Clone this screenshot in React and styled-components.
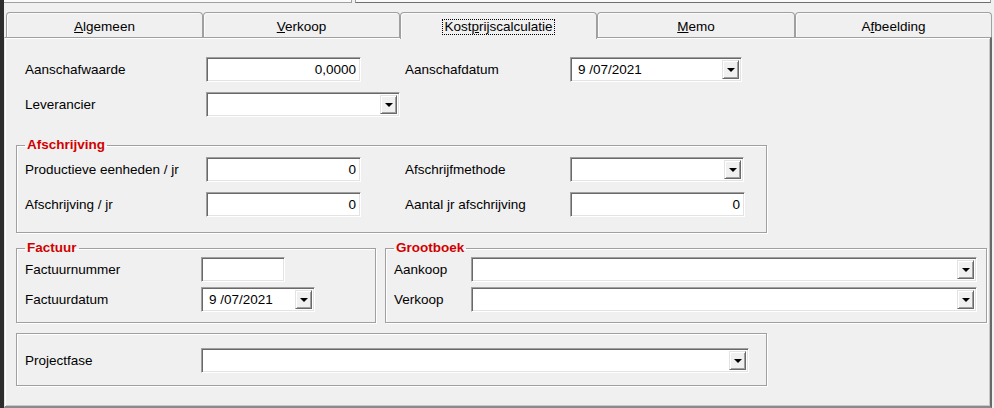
import React from "react";
import styled, { createGlobalStyle, css } from "styled-components";

const GlobalStyle = createGlobalStyle`
  html, body {
    margin: 0;
    padding: 0;
    background: #f0f0f0;
  }
  body {
    font-family: "Liberation Sans", Arial, sans-serif;
    font-size: 13.5px;
    color: #000;
  }
`;

const Shell = styled.div`
  height: 408px;
  display: flex;
  flex-direction: column;
  border-left: 4px solid #2d2d2d;
  box-sizing: border-box;
  overflow: hidden;
`;

const TopStrip = styled.div`
  display: flex;
  gap: 3px;
  height: 3px;
  margin-bottom: 9px;
`;

const StripField = styled.div`
  box-sizing: border-box;
  height: 3px;
  background: #fafafa;
  ${(p) =>
    p.$grow
      ? css`
          flex: 1;
          border-left: 1px solid #a0a0a0;
          border-bottom: 1px solid #6e6e6e;
          border-right: 1px solid #a0a0a0;
          margin-right: 3px;
        `
      : css`
          width: 348px;
          border-right: 1px solid #a0a0a0;
          border-bottom: 1px solid #a0a0a0;
        `}
`;

const TabRow = styled.div`
  display: flex;
  height: 25px;
  padding-left: 2px;
`;

const Tab = styled.div`
  box-sizing: border-box;
  width: ${(p) => p.$w}px;
  height: ${(p) => (p.$active ? 27 : 25)}px;
  margin-bottom: ${(p) => (p.$active ? -2 : 0)}px;
  position: relative;
  z-index: ${(p) => (p.$active ? 1 : 0)};
  display: flex;
  align-items: center;
  justify-content: center;
  padding-top: ${(p) => (p.$active ? 2 : 3)}px;
  background: #f0f0f0;
  border: 1px solid #a0a0a0;
  border-bottom: none;
  border-radius: 4px 4px 0 0;
  box-shadow: inset 1px 1px 0 #fbfbfb;
`;

const TabLabel = styled.span`
  line-height: 14px;
  padding: 0 1px;
  border: 1px dotted ${(p) => (p.$active ? "#000" : "transparent")};
`;

const Key = styled.span`
  text-decoration: underline;
  text-underline-offset: 1px;
`;

const Panel = styled.div`
  flex: 1;
  box-sizing: border-box;
  width: 988px;
  border-top: 1px solid #a0a0a0;
  border-left: 1px solid #e3e3e3;
  border-right: 2px solid #696969;
  border-bottom: 2px solid #8a8a8a;
  box-shadow: inset 1px 1px 0 #fff, inset -1px -1px 0 #c8c8c8;
  padding: 19px 0 0 11px;
`;

const TopSection = styled.div`
  display: flex;
  flex-direction: column;
  gap: 10px;
  padding-left: 9px;
`;

const Row = styled.div`
  display: flex;
  align-items: center;
  height: 25px;
`;

const Rows = styled.div`
  display: flex;
  flex-direction: column;
  gap: ${(p) => p.$gap}px;
`;

const Label = styled.div`
  width: ${(p) => p.$w}px;
  margin-left: ${(p) => p.$indent || 0}px;
  flex-shrink: 0;
  white-space: nowrap;
`;

const sunken = css`
  box-sizing: border-box;
  height: 25px;
  flex-shrink: 0;
  background: #fff;
  border: 1px solid;
  border-color: #a0a0a0 #fff #fff #a0a0a0;
  box-shadow: inset 1px 1px 0 #696969, inset -1px -1px 0 #e3e3e3;
`;

const TextBox = styled.div`
  ${sunken};
  width: ${(p) => p.$w}px;
  padding: 0 4px;
  line-height: 23px;
  text-align: right;
`;

const Combo = styled.div`
  ${sunken};
  width: ${(p) => p.$w}px;
  display: flex;
  padding: 2px;
`;

const ComboText = styled.div`
  flex: 1;
  padding-left: 5px;
  line-height: 20px;
  white-space: nowrap;
  overflow: hidden;
`;

const DropButton = styled.div`
  box-sizing: border-box;
  width: 17px;
  display: flex;
  align-items: center;
  justify-content: center;
  background: #f0f0f0;
  border: 1px solid;
  border-color: #e3e3e3 #696969 #696969 #e3e3e3;
  box-shadow: inset 1px 1px 0 #fff, inset -1px -1px 0 #a0a0a0;
`;

const Arrow = styled.span`
  width: 0;
  height: 0;
  border-left: 4px solid transparent;
  border-right: 4px solid transparent;
  border-top: 4px solid #000;
  margin-top: 1px;
`;

const Group = styled.fieldset`
  box-sizing: border-box;
  width: ${(p) => p.$w}px;
  margin: ${(p) => p.$mt || 0}px 0 0 0;
  padding: ${(p) => p.$pad};
  min-width: 0;
  border: 1px solid #a0a0a0;
  box-shadow: inset 1px 1px 0 #fff, 1px 1px 0 #fff;
`;

const Legend = styled.legend`
  padding: 0 2px;
  margin: 0;
  line-height: 16px;
  color: #d00000;
  font-weight: bold;
`;

const GroupRow = styled.div`
  display: flex;
  gap: 9px;
  margin-top: 7px;
`;

function ComboBox({ w, value }) {
  return (
    <Combo $w={w}>
      <ComboText>{value}</ComboText>
      <DropButton>
        <Arrow />
      </DropButton>
    </Combo>
  );
}

const tabs = [
  { w: 197, label: <><Key>A</Key>lgemeen</> },
  { w: 197, label: <><Key>V</Key>erkoop</> },
  { w: 197, label: <>Kost<Key>p</Key>rijscalculatie</>, active: true },
  { w: 198, label: <><Key>M</Key>emo</> },
  { w: 197, label: <>A<Key>f</Key>beelding</> },
];

export default function App() {
  return (
    <>
      <GlobalStyle />
      <Shell>
        <TopStrip>
          <StripField />
          <StripField $grow />
        </TopStrip>

        <TabRow>
          {tabs.map((t, i) => (
            <Tab key={i} $w={t.w} $active={t.active}>
              <TabLabel $active={t.active}>{t.label}</TabLabel>
            </Tab>
          ))}
        </TabRow>

        <Panel>
          <TopSection>
            <Row>
              <Label $w={181}>Aanschafwaarde</Label>
              <TextBox $w={155}>0,0000</TextBox>
              <Label $w={165} $indent={44}>Aanschafdatum</Label>
              <ComboBox w={172} value="9 /07/2021" />
            </Row>
            <Row>
              <Label $w={181}>Leverancier</Label>
              <ComboBox w={194} />
            </Row>
          </TopSection>

          <Group $w={751} $mt={20} $pad="4px 8px 15px 8px">
            <Legend>Afschrijving</Legend>
            <Rows $gap={10}>
              <Row>
                <Label $w={181}>Productieve eenheden / jr</Label>
                <TextBox $w={155}>0</TextBox>
                <Label $w={165} $indent={44}>Afschrijfmethode</Label>
                <ComboBox w={174} />
              </Row>
              <Row>
                <Label $w={181}>Afschrijving / jr</Label>
                <TextBox $w={155}>0</TextBox>
                <Label $w={165} $indent={44}>Aantal jr afschrijving</Label>
                <TextBox $w={175}>0</TextBox>
              </Row>
            </Rows>
          </Group>

          <GroupRow>
            <Group $w={360} $pad="1px 8px 10px 8px">
              <Legend>Factuur</Legend>
              <Rows $gap={5}>
                <Row>
                  <Label $w={176}>Factuurnummer</Label>
                  <TextBox $w={84} />
                </Row>
                <Row>
                  <Label $w={176}>Factuurdatum</Label>
                  <ComboBox w={114} value="9 /07/2021" />
                </Row>
              </Rows>
            </Group>

            <Group $w={602} $pad="1px 8px 10px 8px">
              <Legend>Grootboek</Legend>
              <Rows $gap={5}>
                <Row>
                  <Label $w={77}>Aankoop</Label>
                  <ComboBox w={506} />
                </Row>
                <Row>
                  <Label $w={77}>Verkoop</Label>
                  <ComboBox w={506} />
                </Row>
              </Rows>
            </Group>
          </GroupRow>

          <Group $w={751} $mt={10} $pad="14px 8px 12px 8px">
            <Row>
              <Label $w={176}>Projectfase</Label>
              <ComboBox w={548} />
            </Row>
          </Group>
        </Panel>
      </Shell>
    </>
  );
}
